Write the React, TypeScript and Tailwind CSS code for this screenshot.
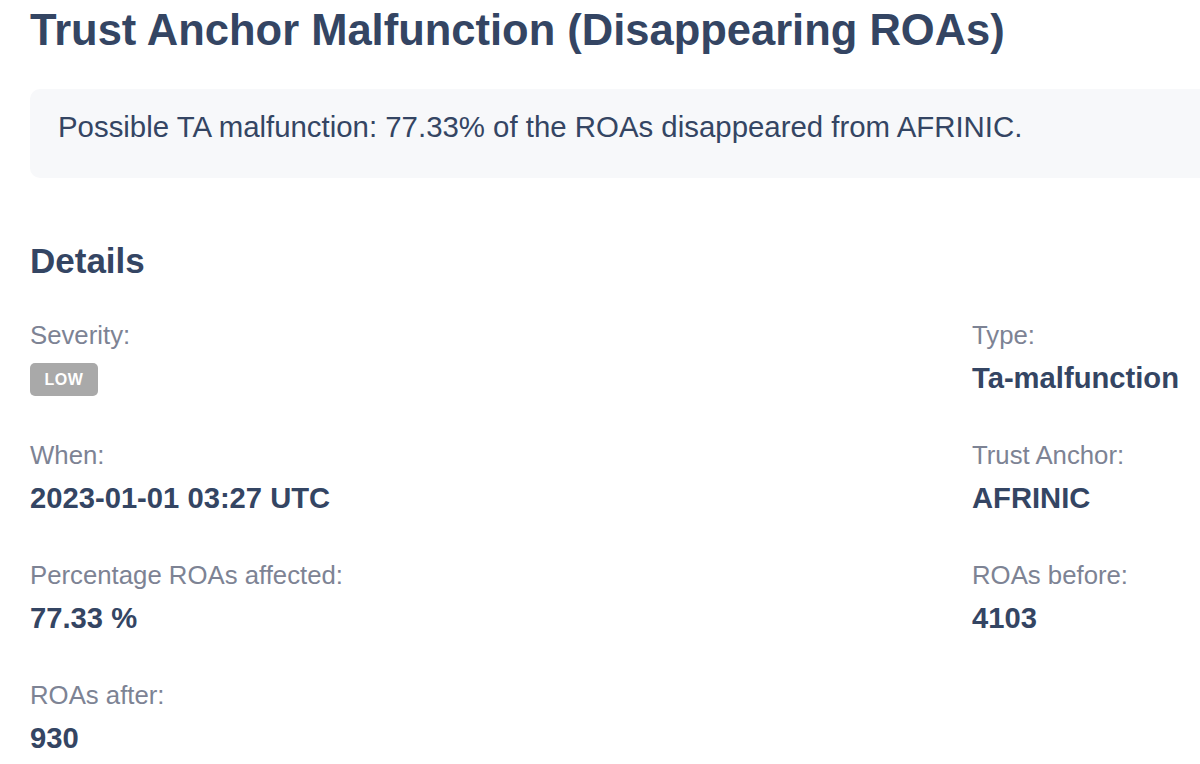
import React from "react";

const font = { fontFamily: '"Liberation Sans", Arial, Helvetica, sans-serif' };

function Field({ label, children }: { label: string; children: React.ReactNode }) {
  return (
    <div className="flex flex-col">
      <div className="text-[25.75px] leading-[38px] text-[#7d8394]">{label}</div>
      {children}
    </div>
  );
}

function Value({ children }: { children: React.ReactNode }) {
  return <div className="mt-[2px] text-[29.2px] leading-[44px] font-bold text-[#344563]">{children}</div>;
}

export default function App() {
  return (
    <div className="w-[1200px] h-[764px] overflow-hidden bg-white" style={font}>
      <div className="w-[1900px] px-[30px] pt-[4px]">
        <h1 className="text-[43.5px] leading-[52px] font-bold text-[#344563]">
          Trust Anchor Malfunction (Disappearing ROAs)
        </h1>
        <div className="mt-[33px] h-[89px] rounded-[10px] bg-[#f7f8fa] pl-[28px] pt-[16px]">
          <p className="text-[29.4px] leading-[44px] text-[#344563]">
            Possible TA malfunction: 77.33% of the ROAs disappeared from AFRINIC.
          </p>
        </div>
        <h2 className="mt-[62px] text-[35px] leading-[42px] font-bold text-[#344563]">Details</h2>
        <div className="mt-[34px] grid grid-cols-[942px_1fr] gap-y-[36px]">
          <Field label="Severity:">
            <div className="pt-[9px]">
              <span className="inline-flex h-[33px] w-[68px] items-center justify-center rounded-[5px] bg-[#a9a9a9] text-[16px] font-bold tracking-[0.5px] text-white">
                LOW
              </span>
            </div>
          </Field>
          <Field label="Type:">
            <Value>Ta-malfunction</Value>
          </Field>
          <Field label="When:">
            <Value>2023-01-01 03:27 UTC</Value>
          </Field>
          <Field label="Trust Anchor:">
            <Value>AFRINIC</Value>
          </Field>
          <Field label="Percentage ROAs affected:">
            <Value>77.33 %</Value>
          </Field>
          <Field label="ROAs before:">
            <Value>4103</Value>
          </Field>
          <Field label="ROAs after:">
            <Value>930</Value>
          </Field>
        </div>
      </div>
    </div>
  );
}
